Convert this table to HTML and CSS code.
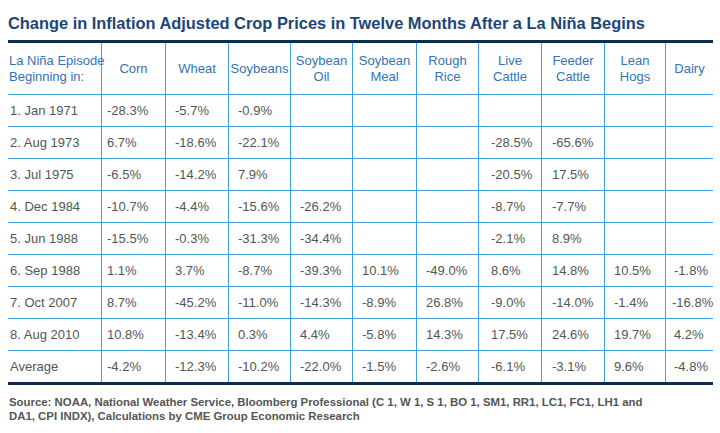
FILE: index.html
```html
<!DOCTYPE html>
<html lang="en">
<head>
<meta charset="utf-8">
<title>La Niña Crop Prices</title>
<link rel="stylesheet" href="styles.css">
</head>
<body>
<div class="page">
  <h1 class="title">Change in Inflation Adjusted Crop Prices in Twelve Months After a La Niña Begins</h1>
  <div class="grid">
    <div class="hd first">La Niña Episode<br>Beginning in:</div>
    <div class="hd">Corn</div>
    <div class="hd">Wheat</div>
    <div class="hd">Soybeans</div>
    <div class="hd">Soybean<br>Oil</div>
    <div class="hd">Soybean<br>Meal</div>
    <div class="hd">Rough<br>Rice</div>
    <div class="hd">Live<br>Cattle</div>
    <div class="hd">Feeder<br>Cattle</div>
    <div class="hd">Lean<br>Hogs</div>
    <div class="hd last">Dairy</div>

    <div class="c first">1. Jan 1971</div><div class="c c2">-28.3%</div><div class="c">-5.7%</div><div class="c">-0.9%</div><div class="c"></div><div class="c"></div><div class="c"></div><div class="c c8"></div><div class="c c9"></div><div class="c"></div><div class="c last"></div>
    <div class="c first">2. Aug 1973</div><div class="c c2">6.7%</div><div class="c">-18.6%</div><div class="c">-22.1%</div><div class="c"></div><div class="c"></div><div class="c"></div><div class="c c8">-28.5%</div><div class="c c9">-65.6%</div><div class="c"></div><div class="c last"></div>
    <div class="c first">3. Jul 1975</div><div class="c c2">-6.5%</div><div class="c">-14.2%</div><div class="c">7.9%</div><div class="c"></div><div class="c"></div><div class="c"></div><div class="c c8">-20.5%</div><div class="c c9">17.5%</div><div class="c"></div><div class="c last"></div>
    <div class="c first">4. Dec 1984</div><div class="c c2">-10.7%</div><div class="c">-4.4%</div><div class="c">-15.6%</div><div class="c">-26.2%</div><div class="c"></div><div class="c"></div><div class="c c8">-8.7%</div><div class="c c9">-7.7%</div><div class="c"></div><div class="c last"></div>
    <div class="c first">5. Jun 1988</div><div class="c c2">-15.5%</div><div class="c">-0.3%</div><div class="c">-31.3%</div><div class="c">-34.4%</div><div class="c"></div><div class="c"></div><div class="c c8">-2.1%</div><div class="c c9">8.9%</div><div class="c"></div><div class="c last"></div>
    <div class="c first">6. Sep 1988</div><div class="c c2">1.1%</div><div class="c">3.7%</div><div class="c">-8.7%</div><div class="c">-39.3%</div><div class="c">10.1%</div><div class="c">-49.0%</div><div class="c c8">8.6%</div><div class="c c9">14.8%</div><div class="c">10.5%</div><div class="c last">-1.8%</div>
    <div class="c first">7. Oct 2007</div><div class="c c2">8.7%</div><div class="c">-45.2%</div><div class="c">-11.0%</div><div class="c">-14.3%</div><div class="c">-8.9%</div><div class="c">26.8%</div><div class="c c8">-9.0%</div><div class="c c9">-14.0%</div><div class="c">-1.4%</div><div class="c last wide">-16.8%</div>
    <div class="c first">8. Aug 2010</div><div class="c c2">10.8%</div><div class="c">-13.4%</div><div class="c">0.3%</div><div class="c">4.4%</div><div class="c">-5.8%</div><div class="c">14.3%</div><div class="c c8">17.5%</div><div class="c c9">24.6%</div><div class="c">19.7%</div><div class="c last">4.2%</div>
    <div class="c first end">Average</div><div class="c c2 end">-4.2%</div><div class="c end">-12.3%</div><div class="c end">-10.2%</div><div class="c end">-22.0%</div><div class="c end">-1.5%</div><div class="c end">-2.6%</div><div class="c c8 end">-6.1%</div><div class="c c9 end">-3.1%</div><div class="c end">9.6%</div><div class="c last end">-4.8%</div>
  </div>
  <p class="source">Source: NOAA, National Weather Service, Bloomberg Professional (C 1, W 1, S 1, BO 1, SM1, RR1, LC1, FC1, LH1 and<br>DA1, CPI INDX), Calculations by CME Group Economic Research</p>
</div>
</body>
</html>
```

FILE: styles.css
```css
* { box-sizing: border-box; }
html, body { margin: 0; padding: 0; background: #fff; }
body { font-family: "Liberation Sans", Arial, sans-serif; }
.page { width: 720px; padding: 13px 7px 0 8px; }
.title {
  margin: 0 0 7px 0;
  font-size: 16.4px;
  line-height: 20px;
  font-weight: bold;
  color: #1c4677;
  white-space: nowrap;
}
.grid {
  display: grid;
  grid-template-columns: 94px 64px 63px 62px 62px 64px 62px 63px 63px 61px 47px;
  grid-template-rows: 52px repeat(8, 32px) 31px;
  border-top: 3px solid #0c2d52;
  border-bottom: 3px solid #0c2d52;
}
.hd, .c {
  border-right: 1px solid #44a2d9;
  border-bottom: 1px solid #44a2d9;
  display: flex;
  align-items: center;
  white-space: nowrap;
}
.last { border-right: none; }
.end { border-bottom: none; }
.hd {
  justify-content: center;
  text-align: center;
  color: #3274b4;
  font-size: 13px;
  line-height: 16px;
  padding: 0 1px;
}
.hd.first { justify-content: flex-start; text-align: left; padding-left: 1px; }
.c {
  color: #555;
  font-size: 13px;
  line-height: 16px;
  padding-left: 9px;
}
.c.first { padding-left: 2px; }
.c.c2 { padding-left: 5px; }
.c.c8 { padding-left: 12px; }
.c.c9 { padding-left: 10px; }
.c.last { padding-left: 8px; }
.c.last.wide { padding-left: 6px; }
.source {
  margin: 10px 0 0 1px;
  font-size: 11.4px;
  line-height: 14px;
  font-weight: bold;
  color: #555;
  white-space: nowrap;
}
```
